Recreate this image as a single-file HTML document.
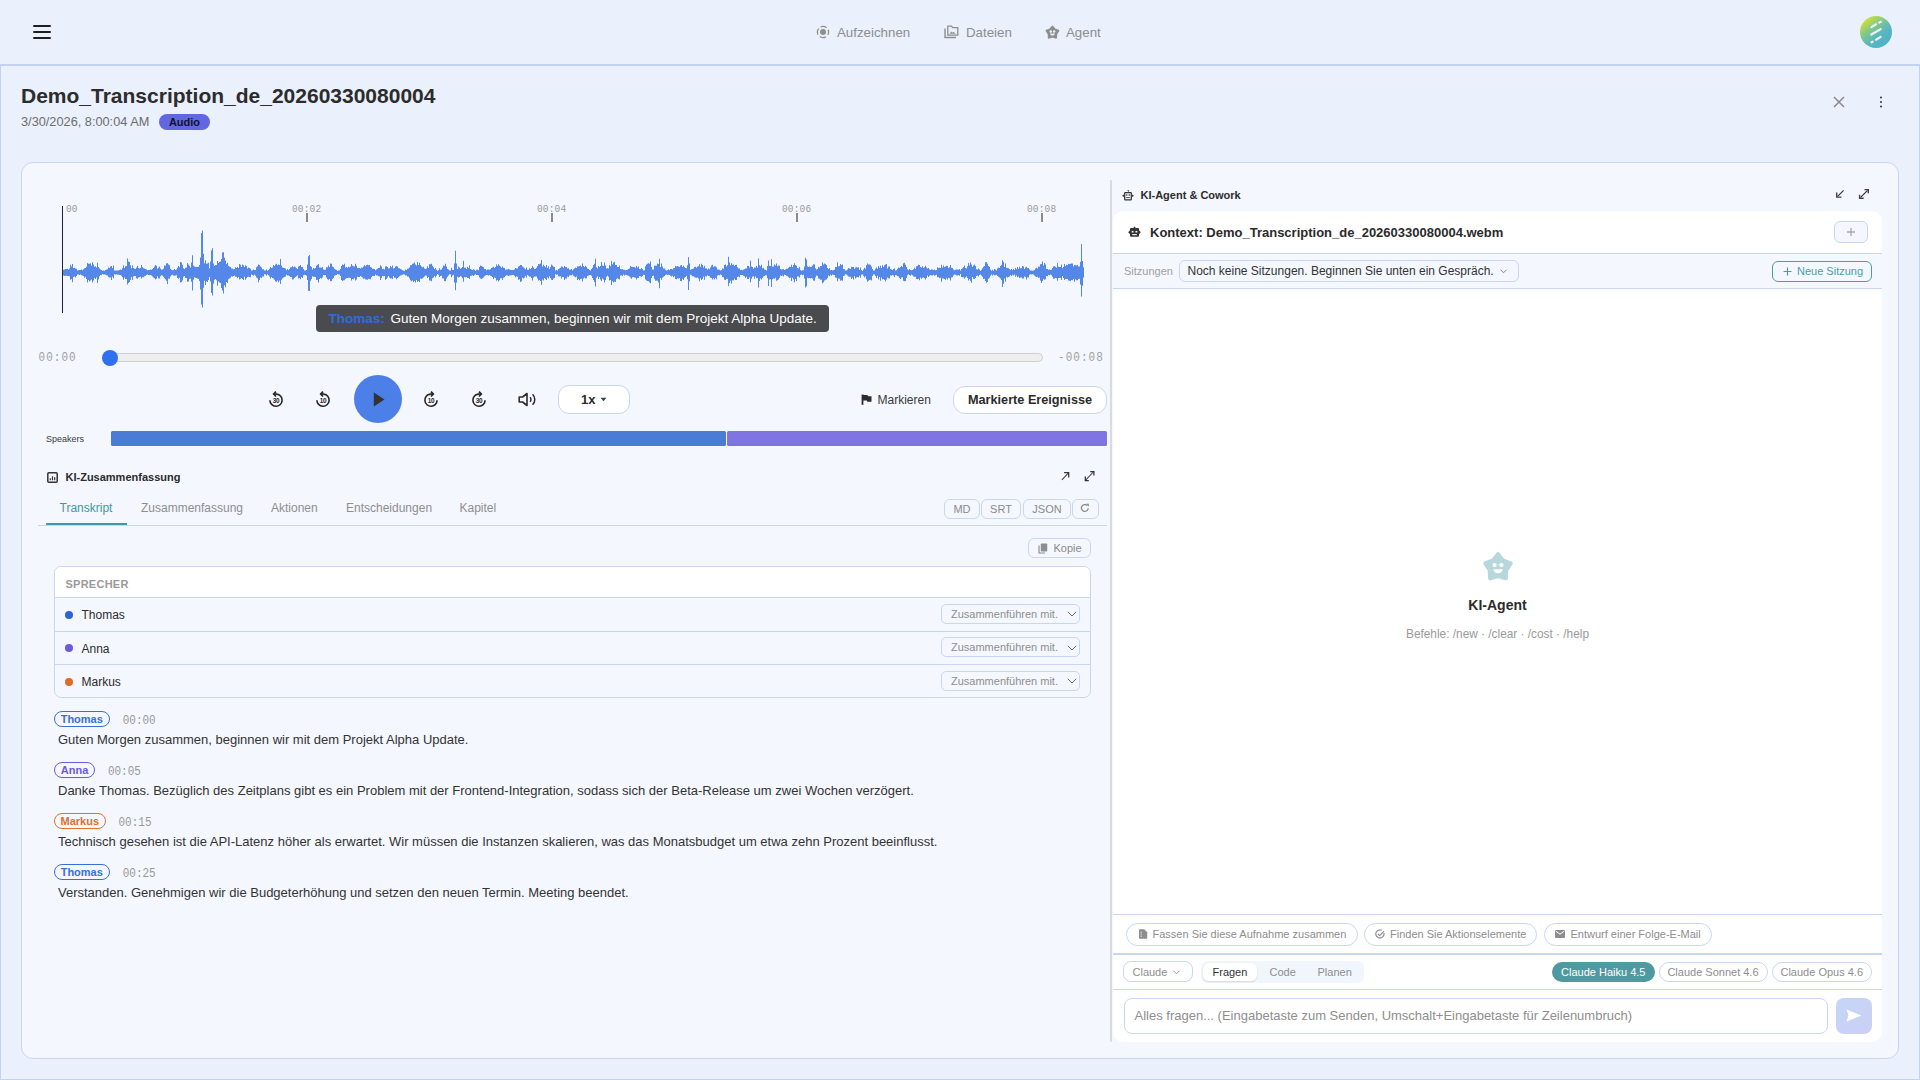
<!DOCTYPE html>
<html><head><meta charset="utf-8">
<style>
*{box-sizing:border-box;margin:0;padding:0}
html,body{width:1920px;height:1080px;overflow:hidden}
body{background:#EAF0FC;font-family:"Liberation Sans",sans-serif;color:#2B2B2B;position:relative}
.a{position:absolute;white-space:nowrap}
.mono{font-family:"Liberation Mono",monospace}
svg{display:block}
</style></head><body>

<!-- top nav -->
<div class="a" style="left:0;top:0;width:1920px;height:66px;border-bottom:2px solid #C3D2F0;"></div>
<div class="a" style="left:33px;top:25px;width:18px;height:2px;background:#1E1E1E;border-radius:1px"></div>
<div class="a" style="left:33px;top:31px;width:18px;height:2px;background:#1E1E1E;border-radius:1px"></div>
<div class="a" style="left:33px;top:37px;width:18px;height:2px;background:#1E1E1E;border-radius:1px"></div>

<!-- frame -->
<div class="a" style="left:0;top:66px;width:1920px;height:1014px;border:1px solid #C3D2F0;border-top:none"></div>


<!-- nav items -->
<svg class="a" style="left:816px;top:25px" width="14" height="14" viewBox="0 0 14 14"><circle cx="7" cy="7" r="5.6" fill="none" stroke="#8E8E8E" stroke-width="1.3" stroke-dasharray="6.3 2.5" stroke-dashoffset="3.15"/><circle cx="7" cy="7" r="3" fill="#8E8E8E"/></svg>
<div class="a" style="left:837px;top:26px;font-size:13.3px;line-height:13px;color:#8E8E8E">Aufzeichnen</div>
<svg class="a" style="left:944px;top:25px" width="15" height="14" viewBox="0 0 15 14"><path d="M1 3.5V12.5H12" fill="none" stroke="#8E8E8E" stroke-width="1.4"/><path d="M3.8 1.2H7.5L8.8 2.6H13.8V10.2H3.8Z" fill="none" stroke="#8E8E8E" stroke-width="1.3"/><path d="M5.6 8.8L7.3 6.4L8.5 7.8L9.5 6.8L11.8 8.8Z" fill="#8E8E8E"/></svg>
<div class="a" style="left:966px;top:26px;font-size:13.3px;line-height:13px;color:#8E8E8E">Dateien</div>
<svg class="a" style="left:1044.7px;top:24.8px" width="14.9" height="14.9" viewBox="0 0 32 32"><polygon points="16.00,3.20 21.05,9.54 28.65,12.39 24.18,19.16 23.82,27.26 16.00,25.10 8.18,27.26 7.82,19.16 3.35,12.39 10.95,9.54" fill="#8E8E8E" stroke="#8E8E8E" stroke-width="4.2" stroke-linejoin="round"/><circle cx="12.4" cy="14" r="2.6" fill="#EAF0FC"/><circle cx="19.6" cy="14" r="2.6" fill="#EAF0FC"/><path d="M10.8 18.2h10.4c-.6 2.9-2.6 4.4-5.2 4.4s-4.6-1.5-5.2-4.4z" fill="#EAF0FC"/></svg>
<div class="a" style="left:1066px;top:26px;font-size:13.3px;line-height:13px;color:#8E8E8E">Agent</div>

<!-- logo -->
<svg class="a" style="left:1860px;top:16px" width="32" height="32" viewBox="0 0 32 32"><defs><linearGradient id="lg" x1="0.1" y1="0.15" x2="0.65" y2="0.85"><stop offset="0" stop-color="#D4E035"/><stop offset="0.4" stop-color="#7FC98A"/><stop offset="0.75" stop-color="#5AB6C0"/><stop offset="1" stop-color="#52B3C6"/></linearGradient></defs><circle cx="16" cy="16" r="16" fill="url(#lg)"/><g stroke="#EEF3FB" stroke-width="2.2" stroke-linecap="round"><path d="M11.4 11.1L16.1 8.3M19.2 6.6L20.9 5.7"/><path d="M11.3 18.5L20.7 13.1"/><path d="M11.5 26.3L12.8 25.6M16.1 23.7L20.7 20.9"/></g></svg>

<!-- close / kebab -->
<svg class="a" style="left:1833px;top:96px" width="12" height="12" viewBox="0 0 12 12"><path d="M1 1L11 11M11 1L1 11" stroke="#8A8A8A" stroke-width="1.5"/></svg>
<svg class="a" style="left:1879px;top:95px" width="4" height="14" viewBox="0 0 4 14"><circle cx="2" cy="2.5" r="1" fill="#333"/><circle cx="2" cy="7" r="1" fill="#333"/><circle cx="2" cy="11.5" r="1" fill="#333"/></svg>

<!-- header -->
<div class="a" style="left:21px;top:84px;font-size:21px;font-weight:bold;color:#2C2C2C;line-height:24px">Demo_Transcription_de_20260330080004</div>
<div class="a" style="left:21px;top:114px;font-size:12.75px;color:#6E6E6E;line-height:16px">3/30/2026, 8:00:04 AM</div>
<div class="a" style="left:159px;top:114px;width:51px;height:16px;border-radius:8px;background:#6366E1;color:#0F1230;font-size:11px;font-weight:bold;line-height:16px;text-align:center">Audio</div>

<!-- main card -->
<div class="a" style="left:21px;top:162px;width:1878px;height:897px;border:1px solid #C9D6F2;border-radius:12px;background:#F4F7FE"></div>


<!-- waveform -->
<svg class="a" style="left:0;top:0" width="1110" height="330" viewBox="0 0 1110 330"><path d="M62,269.8L63,269.8L63,269.7L64,269.7L64,269.5L65,269.5L65,268.9L66,268.9L66,269.1L67,269.1L67,268.7L68,268.7L68,269.4L69,269.4L69,268.5L70,268.5L70,264.7L71,264.7L71,266.6L72,266.6L72,264.1L73,264.1L73,268.1L74,268.1L74,267.8L75,267.8L75,268.5L76,268.5L76,268.8L77,268.8L77,270.4L78,270.4L78,270.3L79,270.3L79,269.9L80,269.9L80,270.1L81,270.1L81,269.6L82,269.6L82,270.2L83,270.2L83,269.2L84,269.2L84,268.2L85,268.2L85,268.1L86,268.1L86,266.8L87,266.8L87,263.1L88,263.1L88,263.8L89,263.8L89,263.7L90,263.7L90,263.2L91,263.2L91,265.8L92,265.8L92,262.2L93,262.2L93,264.6L94,264.6L94,266.8L95,266.8L95,266.3L96,266.3L96,267.5L97,267.5L97,262.7L98,262.7L98,267.0L99,267.0L99,268.5L100,268.5L100,269.5L101,269.5L101,270.1L102,270.1L102,270.7L103,270.7L103,270.5L104,270.5L104,270.7L105,270.7L105,270.1L106,270.1L106,269.6L107,269.6L107,269.3L108,269.3L108,267.6L109,267.6L109,268.0L110,268.0L110,266.6L111,266.6L111,266.0L112,266.0L112,268.0L113,268.0L113,265.5L114,265.5L114,270.4L115,270.4L115,270.5L116,270.5L116,270.6L117,270.6L117,270.4L118,270.4L118,270.5L119,270.5L119,270.1L120,270.1L120,269.6L121,269.6L121,270.0L122,270.0L122,268.3L123,268.3L123,265.4L124,265.4L124,267.9L125,267.9L125,266.3L126,266.3L126,266.0L127,266.0L127,258.5L128,258.5L128,261.4L129,261.4L129,261.9L130,261.9L130,265.2L131,265.2L131,268.3L132,268.3L132,265.5L133,265.5L133,268.0L134,268.0L134,268.8L135,268.8L135,269.0L136,269.0L136,267.6L137,267.6L137,265.7L138,265.7L138,268.1L139,268.1L139,268.5L140,268.5L140,268.0L141,268.0L141,265.1L142,265.1L142,267.0L143,267.0L143,268.2L144,268.2L144,268.5L145,268.5L145,269.0L146,269.0L146,269.5L147,269.5L147,270.3L148,270.3L148,270.1L149,270.1L149,270.0L150,270.0L150,269.6L151,269.6L151,269.8L152,269.8L152,268.9L153,268.9L153,267.9L154,267.9L154,266.5L155,266.5L155,265.0L156,265.0L156,265.8L157,265.8L157,268.8L158,268.8L158,267.8L159,267.8L159,266.5L160,266.5L160,268.4L161,268.4L161,269.7L162,269.7L162,269.5L163,269.5L163,268.8L164,268.8L164,265.5L165,265.5L165,265.7L166,265.7L166,263.3L167,263.3L167,263.2L168,263.2L168,264.5L169,264.5L169,265.2L170,265.2L170,268.8L171,268.8L171,269.8L172,269.8L172,270.2L173,270.2L173,270.1L174,270.1L174,269.1L175,269.1L175,269.9L176,269.9L176,269.6L177,269.6L177,267.7L178,267.7L178,266.1L179,266.1L179,267.3L180,267.3L180,262.1L181,262.1L181,262.6L182,262.6L182,264.8L183,264.8L183,268.2L184,268.2L184,268.9L185,268.9L185,267.8L186,267.8L186,267.5L187,267.5L187,263.0L188,263.0L188,264.5L189,264.5L189,265.8L190,265.8L190,267.4L191,267.4L191,262.5L192,262.5L192,255.2L193,255.2L193,265.5L194,265.5L194,266.5L195,266.5L195,267.0L196,267.0L196,266.7L197,266.7L197,267.0L198,267.0L198,266.7L199,266.7L199,265.1L200,265.1L200,257.4L201,257.4L201,233.0L202,233.0L202,230.4L203,230.4L203,253.7L204,253.7L204,263.3L205,263.3L205,260.2L206,260.2L206,263.7L207,263.7L207,263.4L208,263.4L208,262.8L209,262.8L209,268.2L210,268.2L210,261.4L211,261.4L211,250.4L212,250.4L212,248.2L213,248.2L213,263.5L214,263.5L214,266.1L215,266.1L215,265.0L216,265.0L216,264.9L217,264.9L217,261.1L218,261.1L218,262.9L219,262.9L219,261.9L220,261.9L220,261.6L221,261.6L221,259.0L222,259.0L222,252.4L223,252.4L223,252.2L224,252.2L224,257.7L225,257.7L225,260.4L226,260.4L226,263.9L227,263.9L227,262.8L228,262.8L228,265.8L229,265.8L229,266.5L230,266.5L230,267.0L231,267.0L231,268.4L232,268.4L232,268.6L233,268.6L233,269.3L234,269.3L234,269.0L235,269.0L235,267.2L236,267.2L236,267.9L237,267.9L237,267.1L238,267.1L238,267.9L239,267.9L239,263.9L240,263.9L240,264.8L241,264.8L241,267.1L242,267.1L242,264.5L243,264.5L243,265.3L244,265.3L244,267.1L245,267.1L245,265.4L246,265.4L246,265.9L247,265.9L247,268.5L248,268.5L248,267.6L249,267.6L249,268.0L250,268.0L250,268.7L251,268.7L251,270.5L252,270.5L252,270.3L253,270.3L253,269.6L254,269.6L254,269.9L255,269.9L255,269.9L256,269.9L256,267.3L257,267.3L257,266.3L258,266.3L258,264.4L259,264.4L259,265.0L260,265.0L260,266.6L261,266.6L261,267.6L262,267.6L262,269.2L263,269.2L263,269.2L264,269.2L264,270.5L265,270.5L265,270.6L266,270.6L266,269.6L267,269.6L267,270.7L268,270.7L268,270.1L269,270.1L269,268.7L270,268.7L270,266.9L271,266.9L271,268.1L272,268.1L272,267.4L273,267.4L273,264.9L274,264.9L274,266.0L275,266.0L275,264.5L276,264.5L276,263.8L277,263.8L277,265.3L278,265.3L278,264.6L279,264.6L279,265.1L280,265.1L280,259.1L281,259.1L281,265.5L282,265.5L282,267.5L283,267.5L283,267.8L284,267.8L284,268.1L285,268.1L285,268.4L286,268.4L286,270.2L287,270.2L287,269.1L288,269.1L288,269.9L289,269.9L289,269.0L290,269.0L290,267.4L291,267.4L291,267.2L292,267.2L292,266.3L293,266.3L293,267.3L294,267.3L294,266.4L295,266.4L295,267.2L296,267.2L296,268.2L297,268.2L297,269.1L298,269.1L298,266.4L299,266.4L299,265.9L300,265.9L300,265.1L301,265.1L301,267.0L302,267.0L302,267.1L303,267.1L303,269.1L304,269.1L304,270.5L305,270.5L305,270.4L306,270.4L306,270.1L307,270.1L307,264.5L308,264.5L308,256.3L309,256.3L309,254.9L310,254.9L310,266.0L311,266.0L311,267.0L312,267.0L312,269.5L313,269.5L313,268.0L314,268.0L314,268.4L315,268.4L315,268.1L316,268.1L316,265.8L317,265.8L317,264.7L318,264.7L318,264.1L319,264.1L319,267.4L320,267.4L320,267.5L321,267.5L321,267.8L322,267.8L322,267.1L323,267.1L323,269.6L324,269.6L324,269.7L325,269.7L325,269.8L326,269.8L326,267.3L327,267.3L327,267.2L328,267.2L328,265.6L329,265.6L329,266.9L330,266.9L330,263.4L331,263.4L331,263.7L332,263.7L332,266.5L333,266.5L333,267.2L334,267.2L334,268.7L335,268.7L335,269.6L336,269.6L336,270.1L337,270.1L337,270.8L338,270.8L338,270.5L339,270.5L339,270.5L340,270.5L340,269.1L341,269.1L341,266.0L342,266.0L342,264.6L343,264.6L343,265.0L344,265.0L344,263.8L345,263.8L345,267.4L346,267.4L346,267.0L347,267.0L347,267.7L348,267.7L348,266.8L349,266.8L349,267.2L350,267.2L350,266.4L351,266.4L351,264.0L352,264.0L352,265.7L353,265.7L353,266.2L354,266.2L354,266.5L355,266.5L355,263.8L356,263.8L356,265.7L357,265.7L357,267.9L358,267.9L358,267.9L359,267.9L359,268.1L360,268.1L360,268.4L361,268.4L361,267.6L362,267.6L362,267.7L363,267.7L363,266.4L364,266.4L364,265.2L365,265.2L365,266.3L366,266.3L366,265.1L367,265.1L367,264.8L368,264.8L368,265.2L369,265.2L369,265.0L370,265.0L370,266.9L371,266.9L371,267.6L372,267.6L372,268.8L373,268.8L373,268.7L374,268.7L374,268.9L375,268.9L375,270.3L376,270.3L376,269.6L377,269.6L377,268.7L378,268.7L378,268.1L379,268.1L379,267.7L380,267.7L380,265.2L381,265.2L381,266.5L382,266.5L382,269.3L383,269.3L383,268.7L384,268.7L384,269.4L385,269.4L385,266.4L386,266.4L386,266.3L387,266.3L387,267.1L388,267.1L388,268.6L389,268.6L389,268.3L390,268.3L390,266.1L391,266.1L391,267.3L392,267.3L392,265.5L393,265.5L393,268.6L394,268.6L394,267.9L395,267.9L395,266.4L396,266.4L396,266.0L397,266.0L397,266.6L398,266.6L398,268.2L399,268.2L399,268.3L400,268.3L400,268.9L401,268.9L401,269.5L402,269.5L402,270.3L403,270.3L403,270.5L404,270.5L404,270.9L405,270.9L405,269.4L406,269.4L406,269.9L407,269.9L407,268.7L408,268.7L408,268.4L409,268.4L409,267.6L410,267.6L410,265.3L411,265.3L411,264.9L412,264.9L412,263.8L413,263.8L413,263.5L414,263.5L414,262.5L415,262.5L415,264.5L416,264.5L416,265.4L417,265.4L417,261.9L418,261.9L418,265.0L419,265.0L419,262.7L420,262.7L420,265.2L421,265.2L421,266.4L422,266.4L422,267.3L423,267.3L423,266.8L424,266.8L424,268.4L425,268.4L425,269.0L426,269.0L426,268.6L427,268.6L427,266.3L428,266.3L428,268.1L429,268.1L429,264.3L430,264.3L430,264.2L431,264.2L431,263.8L432,263.8L432,265.8L433,265.8L433,267.3L434,267.3L434,268.9L435,268.9L435,267.9L436,267.9L436,269.8L437,269.8L437,270.7L438,270.7L438,270.2L439,270.2L439,268.3L440,268.3L440,269.7L441,269.7L441,269.6L442,269.6L442,267.7L443,267.7L443,265.5L444,265.5L444,265.8L445,265.8L445,263.7L446,263.7L446,266.4L447,266.4L447,269.0L448,269.0L448,269.6L449,269.6L449,270.4L450,270.4L450,270.6L451,270.6L451,267.8L452,267.8L452,269.8L453,269.8L453,270.1L454,270.1L454,263.6L455,263.6L455,250.8L456,250.8L456,263.5L457,263.5L457,268.9L458,268.9L458,266.5L459,266.5L459,267.6L460,267.6L460,268.8L461,268.8L461,268.1L462,268.1L462,267.0L463,267.0L463,260.7L464,260.7L464,267.7L465,267.7L465,267.5L466,267.5L466,269.0L467,269.0L467,266.8L468,266.8L468,268.1L469,268.1L469,265.4L470,265.4L470,269.1L471,269.1L471,269.4L472,269.4L472,270.1L473,270.1L473,269.3L474,269.3L474,269.8L475,269.8L475,270.8L476,270.8L476,269.7L477,269.7L477,269.8L478,269.8L478,270.2L479,270.2L479,267.0L480,267.0L480,265.4L481,265.4L481,265.9L482,265.9L482,266.5L483,266.5L483,267.2L484,267.2L484,269.1L485,269.1L485,269.0L486,269.0L486,270.2L487,270.2L487,269.5L488,269.5L488,269.6L489,269.6L489,269.8L490,269.8L490,269.3L491,269.3L491,268.1L492,268.1L492,267.5L493,267.5L493,266.7L494,266.7L494,267.8L495,267.8L495,267.0L496,267.0L496,264.6L497,264.6L497,265.9L498,265.9L498,264.2L499,264.2L499,265.4L500,265.4L500,266.6L501,266.6L501,267.7L502,267.7L502,266.5L503,266.5L503,267.7L504,267.7L504,267.9L505,267.9L505,269.8L506,269.8L506,269.5L507,269.5L507,269.5L508,269.5L508,268.9L509,268.9L509,269.5L510,269.5L510,269.8L511,269.8L511,270.1L512,270.1L512,269.9L513,269.9L513,270.0L514,270.0L514,269.5L515,269.5L515,268.1L516,268.1L516,268.4L517,268.4L517,268.5L518,268.5L518,266.6L519,266.6L519,265.9L520,265.9L520,265.0L521,265.0L521,265.1L522,265.1L522,266.6L523,266.6L523,267.2L524,267.2L524,268.3L525,268.3L525,269.3L526,269.3L526,267.5L527,267.5L527,269.8L528,269.8L528,269.7L529,269.7L529,268.2L530,268.2L530,268.9L531,268.9L531,267.9L532,267.9L532,266.0L533,266.0L533,267.6L534,267.6L534,269.0L535,269.0L535,268.8L536,268.8L536,267.7L537,267.7L537,266.0L538,266.0L538,263.9L539,263.9L539,264.3L540,264.3L540,263.5L541,263.5L541,260.1L542,260.1L542,266.4L543,266.4L543,264.8L544,264.8L544,265.9L545,265.9L545,267.3L546,267.3L546,265.0L547,265.0L547,267.9L548,267.9L548,266.2L549,266.2L549,269.0L550,269.0L550,267.1L551,267.1L551,264.4L552,264.4L552,265.5L553,265.5L553,266.6L554,266.6L554,266.9L555,266.9L555,270.5L556,270.5L556,270.0L557,270.0L557,270.4L558,270.4L558,269.1L559,269.1L559,268.6L560,268.6L560,267.8L561,267.8L561,266.4L562,266.4L562,266.7L563,266.7L563,267.7L564,267.7L564,266.0L565,266.0L565,267.0L566,267.0L566,267.0L567,267.0L567,268.5L568,268.5L568,268.3L569,268.3L569,269.6L570,269.6L570,269.8L571,269.8L571,268.9L572,268.9L572,270.4L573,270.4L573,269.3L574,269.3L574,268.6L575,268.6L575,267.6L576,267.6L576,267.9L577,267.9L577,266.2L578,266.2L578,266.6L579,266.6L579,265.9L580,265.9L580,265.4L581,265.4L581,266.7L582,266.7L582,263.6L583,263.6L583,266.1L584,266.1L584,267.1L585,267.1L585,265.8L586,265.8L586,267.1L587,267.1L587,268.5L588,268.5L588,268.9L589,268.9L589,270.0L590,270.0L590,270.4L591,270.4L591,269.0L592,269.0L592,267.8L593,267.8L593,264.9L594,264.9L594,263.8L595,263.8L595,258.7L596,258.7L596,267.2L597,267.2L597,268.5L598,268.5L598,266.0L599,266.0L599,267.0L600,267.0L600,266.1L601,266.1L601,262.1L602,262.1L602,265.6L603,265.6L603,265.9L604,265.9L604,262.6L605,262.6L605,265.6L606,265.6L606,268.5L607,268.5L607,268.2L608,268.2L608,268.4L609,268.4L609,264.9L610,264.9L610,266.2L611,266.2L611,261.1L612,261.1L612,264.2L613,264.2L613,262.6L614,262.6L614,261.8L615,261.8L615,264.9L616,264.9L616,265.1L617,265.1L617,266.9L618,266.9L618,267.0L619,267.0L619,265.4L620,265.4L620,269.0L621,269.0L621,269.3L622,269.3L622,268.9L623,268.9L623,269.8L624,269.8L624,269.7L625,269.7L625,270.3L626,270.3L626,270.0L627,270.0L627,269.8L628,269.8L628,269.1L629,269.1L629,268.6L630,268.6L630,266.0L631,266.0L631,266.8L632,266.8L632,266.9L633,266.9L633,266.9L634,266.9L634,267.2L635,267.2L635,267.8L636,267.8L636,266.1L637,266.1L637,267.6L638,267.6L638,266.5L639,266.5L639,269.0L640,269.0L640,269.2L641,269.2L641,268.1L642,268.1L642,269.1L643,269.1L643,270.4L644,270.4L644,270.2L645,270.2L645,266.2L646,266.2L646,264.4L647,264.4L647,263.8L648,263.8L648,263.3L649,263.3L649,263.8L650,263.8L650,261.5L651,261.5L651,267.1L652,267.1L652,269.5L653,269.5L653,269.5L654,269.5L654,265.6L655,265.6L655,265.7L656,265.7L656,265.8L657,265.8L657,263.5L658,263.5L658,264.0L659,264.0L659,258.8L660,258.8L660,266.9L661,266.9L661,263.4L662,263.4L662,266.6L663,266.6L663,268.6L664,268.6L664,268.6L665,268.6L665,269.8L666,269.8L666,270.6L667,270.6L667,270.3L668,270.3L668,269.6L669,269.6L669,270.0L670,270.0L670,269.0L671,269.0L671,268.9L672,268.9L672,269.5L673,269.5L673,268.3L674,268.3L674,268.1L675,268.1L675,266.1L676,266.1L676,266.5L677,266.5L677,266.0L678,266.0L678,266.4L679,266.4L679,267.1L680,267.1L680,265.4L681,265.4L681,265.1L682,265.1L682,266.7L683,266.7L683,265.7L684,265.7L684,267.3L685,267.3L685,268.1L686,268.1L686,268.2L687,268.2L687,265.3L688,265.3L688,257.2L689,257.2L689,263.6L690,263.6L690,269.8L691,269.8L691,269.3L692,269.3L692,269.1L693,269.1L693,268.6L694,268.6L694,267.1L695,267.1L695,266.7L696,266.7L696,267.7L697,267.7L697,266.6L698,266.6L698,266.3L699,266.3L699,264.2L700,264.2L700,266.8L701,266.8L701,263.7L702,263.7L702,265.0L703,265.0L703,267.6L704,267.6L704,265.8L705,265.8L705,268.2L706,268.2L706,268.4L707,268.4L707,269.6L708,269.6L708,268.4L709,268.4L709,269.2L710,269.2L710,267.6L711,267.6L711,265.4L712,265.4L712,264.8L713,264.8L713,266.7L714,266.7L714,266.3L715,266.3L715,266.4L716,266.4L716,267.2L717,267.2L717,269.5L718,269.5L718,269.5L719,269.5L719,269.7L720,269.7L720,270.4L721,270.4L721,270.0L722,270.0L722,268.4L723,268.4L723,268.8L724,268.8L724,265.1L725,265.1L725,264.4L726,264.4L726,266.4L727,266.4L727,265.2L728,265.2L728,256.7L729,256.7L729,262.5L730,262.5L730,265.2L731,265.2L731,263.3L732,263.3L732,264.7L733,264.7L733,264.6L734,264.6L734,266.0L735,266.0L735,265.0L736,265.0L736,264.8L737,264.8L737,267.2L738,267.2L738,268.6L739,268.6L739,268.6L740,268.6L740,270.1L741,270.1L741,269.7L742,269.7L742,270.2L743,270.2L743,269.5L744,269.5L744,269.2L745,269.2L745,268.5L746,268.5L746,268.4L747,268.4L747,265.7L748,265.7L748,265.9L749,265.9L749,267.6L750,267.6L750,260.7L751,260.7L751,266.4L752,266.4L752,267.1L753,267.1L753,268.7L754,268.7L754,267.6L755,267.6L755,267.4L756,267.4L756,265.9L757,265.9L757,267.4L758,267.4L758,258.4L759,258.4L759,265.3L760,265.3L760,266.2L761,266.2L761,264.8L762,264.8L762,268.2L763,268.2L763,267.8L764,267.8L764,269.5L765,269.5L765,269.8L766,269.8L766,270.4L767,270.4L767,266.0L768,266.0L768,260.6L769,260.6L769,265.8L770,265.8L770,266.0L771,266.0L771,259.2L772,259.2L772,266.4L773,266.4L773,266.6L774,266.6L774,264.5L775,264.5L775,265.6L776,265.6L776,263.4L777,263.4L777,266.2L778,266.2L778,265.5L779,265.5L779,265.8L780,265.8L780,268.9L781,268.9L781,269.4L782,269.4L782,269.3L783,269.3L783,269.1L784,269.1L784,269.9L785,269.9L785,269.4L786,269.4L786,268.7L787,268.7L787,268.7L788,268.7L788,267.8L789,267.8L789,266.8L790,266.8L790,266.9L791,266.9L791,264.7L792,264.7L792,267.0L793,267.0L793,265.1L794,265.1L794,263.2L795,263.2L795,265.0L796,265.0L796,265.8L797,265.8L797,268.1L798,268.1L798,268.4L799,268.4L799,267.0L800,267.0L800,270.1L801,270.1L801,270.8L802,270.8L802,270.3L803,270.3L803,270.3L804,270.3L804,266.4L805,266.4L805,257.7L806,257.7L806,259.4L807,259.4L807,266.2L808,266.2L808,266.9L809,266.9L809,266.6L810,266.6L810,267.1L811,267.1L811,266.8L812,266.8L812,265.4L813,265.4L813,264.2L814,264.2L814,264.5L815,264.5L815,268.3L816,268.3L816,269.6L817,269.6L817,268.9L818,268.9L818,266.9L819,266.9L819,267.5L820,267.5L820,265.9L821,265.9L821,266.1L822,266.1L822,262.6L823,262.6L823,264.4L824,264.4L824,263.5L825,263.5L825,264.1L826,264.1L826,265.1L827,265.1L827,268.0L828,268.0L828,269.1L829,269.1L829,268.3L830,268.3L830,270.3L831,270.3L831,270.0L832,270.0L832,270.6L833,270.6L833,270.0L834,270.0L834,269.7L835,269.7L835,266.9L836,266.9L836,267.0L837,267.0L837,262.3L838,262.3L838,266.4L839,266.4L839,266.0L840,266.0L840,264.0L841,264.0L841,264.9L842,264.9L842,264.4L843,264.4L843,269.1L844,269.1L844,269.2L845,269.2L845,270.6L846,270.6L846,270.4L847,270.4L847,269.6L848,269.6L848,268.0L849,268.0L849,268.6L850,268.6L850,269.0L851,269.0L851,266.7L852,266.7L852,266.9L853,266.9L853,267.1L854,267.1L854,268.7L855,268.7L855,267.5L856,267.5L856,267.3L857,267.3L857,267.4L858,267.4L858,267.3L859,267.3L859,269.8L860,269.8L860,267.5L861,267.5L861,269.9L862,269.9L862,270.9L863,270.9L863,269.5L864,269.5L864,267.7L865,267.7L865,268.8L866,268.8L866,265.2L867,265.2L867,263.4L868,263.4L868,264.4L869,264.4L869,264.4L870,264.4L870,264.7L871,264.7L871,266.5L872,266.5L872,269.1L873,269.1L873,270.5L874,270.5L874,270.4L875,270.4L875,268.7L876,268.7L876,267.6L877,267.6L877,268.7L878,268.7L878,265.9L879,265.9L879,267.7L880,267.7L880,265.8L881,265.8L881,267.9L882,267.9L882,265.2L883,265.2L883,266.9L884,266.9L884,265.2L885,265.2L885,264.4L886,264.4L886,263.9L887,263.9L887,268.4L888,268.4L888,266.5L889,266.5L889,266.4L890,266.4L890,269.0L891,269.0L891,269.4L892,269.4L892,270.1L893,270.1L893,269.1L894,269.1L894,268.2L895,268.2L895,270.5L896,270.5L896,270.3L897,270.3L897,268.8L898,268.8L898,267.4L899,267.4L899,268.0L900,268.0L900,267.1L901,267.1L901,266.0L902,266.0L902,266.9L903,266.9L903,263.3L904,263.3L904,262.7L905,262.7L905,264.8L906,264.8L906,267.0L907,267.0L907,269.3L908,269.3L908,270.2L909,270.2L909,269.1L910,269.1L910,269.9L911,269.9L911,270.2L912,270.2L912,270.0L913,270.0L913,269.3L914,269.3L914,267.7L915,267.7L915,268.7L916,268.7L916,266.2L917,266.2L917,265.7L918,265.7L918,264.8L919,264.8L919,265.0L920,265.0L920,267.1L921,267.1L921,267.5L922,267.5L922,266.3L923,266.3L923,267.7L924,267.7L924,267.2L925,267.2L925,265.7L926,265.7L926,267.5L927,267.5L927,268.4L928,268.4L928,268.1L929,268.1L929,269.6L930,269.6L930,270.1L931,270.1L931,269.6L932,269.6L932,269.4L933,269.4L933,270.1L934,270.1L934,269.5L935,269.5L935,270.2L936,270.2L936,270.1L937,270.1L937,267.2L938,267.2L938,268.1L939,268.1L939,267.7L940,267.7L940,268.1L941,268.1L941,264.8L942,264.8L942,267.4L943,267.4L943,265.4L944,265.4L944,266.9L945,266.9L945,266.5L946,266.5L946,265.7L947,265.7L947,265.9L948,265.9L948,268.0L949,268.0L949,267.2L950,267.2L950,265.0L951,265.0L951,267.7L952,267.7L952,268.0L953,268.0L953,269.5L954,269.5L954,270.2L955,270.2L955,269.7L956,269.7L956,269.4L957,269.4L957,269.5L958,269.5L958,269.7L959,269.7L959,269.0L960,269.0L960,270.4L961,270.4L961,268.9L962,268.9L962,268.2L963,268.2L963,267.1L964,267.1L964,265.6L965,265.6L965,267.9L966,267.9L966,268.4L967,268.4L967,266.2L968,266.2L968,262.9L969,262.9L969,265.6L970,265.6L970,262.6L971,262.6L971,264.5L972,264.5L972,266.7L973,266.7L973,265.5L974,265.5L974,264.5L975,264.5L975,266.1L976,266.1L976,269.2L977,269.2L977,269.6L978,269.6L978,268.5L979,268.5L979,269.6L980,269.6L980,270.7L981,270.7L981,270.0L982,270.0L982,268.2L983,268.2L983,266.8L984,266.8L984,266.1L985,266.1L985,262.3L986,262.3L986,262.0L987,262.0L987,263.8L988,263.8L988,265.9L989,265.9L989,266.7L990,266.7L990,269.5L991,269.5L991,270.8L992,270.8L992,269.7L993,269.7L993,270.7L994,270.7L994,269.1L995,269.1L995,269.4L996,269.4L996,270.6L997,270.6L997,268.5L998,268.5L998,267.6L999,267.6L999,268.1L1000,268.1L1000,265.9L1001,265.9L1001,264.8L1002,264.8L1002,260.2L1003,260.2L1003,262.0L1004,262.0L1004,267.0L1005,267.0L1005,263.5L1006,263.5L1006,267.8L1007,267.8L1007,268.0L1008,268.0L1008,268.3L1009,268.3L1009,268.9L1010,268.9L1010,270.1L1011,270.1L1011,268.9L1012,268.9L1012,270.3L1013,270.3L1013,268.9L1014,268.9L1014,270.0L1015,270.0L1015,267.9L1016,267.9L1016,269.3L1017,269.3L1017,267.1L1018,267.1L1018,268.8L1019,268.8L1019,266.8L1020,266.8L1020,268.2L1021,268.2L1021,268.3L1022,268.3L1022,265.9L1023,265.9L1023,266.6L1024,266.6L1024,269.0L1025,269.0L1025,267.6L1026,267.6L1026,266.8L1027,266.8L1027,267.9L1028,267.9L1028,268.1L1029,268.1L1029,269.5L1030,269.5L1030,270.4L1031,270.4L1031,270.5L1032,270.5L1032,270.7L1033,270.7L1033,270.4L1034,270.4L1034,269.9L1035,269.9L1035,268.6L1036,268.6L1036,267.8L1037,267.8L1037,268.4L1038,268.4L1038,266.4L1039,266.4L1039,266.8L1040,266.8L1040,264.3L1041,264.3L1041,263.9L1042,263.9L1042,261.4L1043,261.4L1043,265.6L1044,265.6L1044,263.0L1045,263.0L1045,264.5L1046,264.5L1046,268.9L1047,268.9L1047,269.0L1048,269.0L1048,269.7L1049,269.7L1049,269.6L1050,269.6L1050,270.1L1051,270.1L1051,269.8L1052,269.8L1052,268.3L1053,268.3L1053,266.5L1054,266.5L1054,266.3L1055,266.3L1055,266.8L1056,266.8L1056,267.7L1057,267.7L1057,263.1L1058,263.1L1058,266.8L1059,266.8L1059,267.1L1060,267.1L1060,266.9L1061,266.9L1061,264.4L1062,264.4L1062,268.2L1063,268.2L1063,267.1L1064,267.1L1064,263.9L1065,263.9L1065,266.0L1066,266.0L1066,264.8L1067,264.8L1067,265.2L1068,265.2L1068,263.7L1069,263.7L1069,264.1L1070,264.1L1070,263.8L1071,263.8L1071,263.5L1072,263.5L1072,263.4L1073,263.4L1073,266.4L1074,266.4L1074,264.9L1075,264.9L1075,265.2L1076,265.2L1076,265.6L1077,265.6L1077,264.9L1078,264.9L1078,266.6L1079,266.6L1079,266.5L1080,266.5L1080,261.7L1081,261.7L1081,244.0L1082,244.0L1082,261.0L1083,261.0L1083,267.3L1084,267.3L1084,277.6L1083,277.6L1083,285.8L1082,285.8L1082,296.5L1081,296.5L1081,284.6L1080,284.6L1080,278.8L1079,278.8L1079,278.9L1078,278.9L1078,280.2L1077,280.2L1077,280.3L1076,280.3L1076,279.2L1075,279.2L1075,281.8L1074,281.8L1074,279.0L1073,279.0L1073,280.2L1072,280.2L1072,280.0L1071,280.0L1071,281.1L1070,281.1L1070,280.8L1069,280.8L1069,280.4L1068,280.4L1068,278.9L1067,278.9L1067,278.9L1066,278.9L1066,278.9L1065,278.9L1065,280.0L1064,280.0L1064,277.9L1063,277.9L1063,276.0L1062,276.0L1062,279.9L1061,279.9L1061,277.7L1060,277.7L1060,278.1L1059,278.1L1059,278.1L1058,278.1L1058,280.8L1057,280.8L1057,278.2L1056,278.2L1056,277.9L1055,277.9L1055,278.4L1054,278.4L1054,278.7L1053,278.7L1053,276.8L1052,276.8L1052,275.2L1051,275.2L1051,274.6L1050,274.6L1050,275.2L1049,275.2L1049,274.9L1048,274.9L1048,276.2L1047,276.2L1047,275.9L1046,275.9L1046,279.3L1045,279.3L1045,279.8L1044,279.8L1044,278.9L1043,278.9L1043,280.9L1042,280.9L1042,283.0L1041,283.0L1041,280.6L1040,280.6L1040,277.4L1039,277.4L1039,278.1L1038,278.1L1038,276.7L1037,276.7L1037,277.1L1036,277.1L1036,276.4L1035,276.4L1035,275.4L1034,275.4L1034,274.5L1033,274.5L1033,274.3L1032,274.3L1032,274.5L1031,274.5L1031,274.3L1030,274.3L1030,274.8L1029,274.8L1029,277.5L1028,277.5L1028,277.6L1027,277.6L1027,279.4L1026,279.4L1026,276.9L1025,276.9L1025,276.6L1024,276.6L1024,278.6L1023,278.6L1023,278.4L1022,278.4L1022,277.4L1021,277.4L1021,277.5L1020,277.5L1020,278.1L1019,278.1L1019,276.4L1018,276.4L1018,277.2L1017,277.2L1017,275.5L1016,275.5L1016,276.8L1015,276.8L1015,274.5L1014,274.5L1014,275.5L1013,275.5L1013,274.8L1012,274.8L1012,276.0L1011,276.0L1011,275.1L1010,275.1L1010,276.6L1009,276.6L1009,277.0L1008,277.0L1008,277.4L1007,277.4L1007,276.8L1006,276.8L1006,281.7L1005,281.7L1005,278.4L1004,278.4L1004,283.8L1003,283.8L1003,287.0L1002,287.0L1002,280.1L1001,280.1L1001,278.4L1000,278.4L1000,277.5L999,277.5L999,276.7L998,276.7L998,275.9L997,275.9L997,274.7L996,274.7L996,275.3L995,275.3L995,275.3L994,275.3L994,274.5L993,274.5L993,275.4L992,275.4L992,274.6L991,274.6L991,275.7L990,275.7L990,277.8L989,277.8L989,278.7L988,278.7L988,282.1L987,282.1L987,282.7L986,282.7L986,281.1L985,281.1L985,278.7L984,278.7L984,278.9L983,278.9L983,276.8L982,276.8L982,275.4L981,275.4L981,274.6L980,274.6L980,275.0L979,275.0L979,276.5L978,276.5L978,275.5L977,275.5L977,276.1L976,276.1L976,278.1L975,278.1L975,279.0L974,279.0L974,278.7L973,278.7L973,276.9L972,276.9L972,282.7L971,282.7L971,280.7L970,280.7L970,279.0L969,279.0L969,280.5L968,280.5L968,278.1L967,278.1L967,276.6L966,276.6L966,277.5L965,277.5L965,278.6L964,278.6L964,277.2L963,277.2L963,277.2L962,277.2L962,277.1L961,277.1L961,274.1L960,274.1L960,275.8L959,275.8L959,275.3L958,275.3L958,275.5L957,275.5L957,275.3L956,275.3L956,274.7L955,274.7L955,274.4L954,274.4L954,275.6L953,275.6L953,277.2L952,277.2L952,277.4L951,277.4L951,280.5L950,280.5L950,278.3L949,278.3L949,277.7L948,277.7L948,279.5L947,279.5L947,278.2L946,278.2L946,279.7L945,279.7L945,279.0L944,279.0L944,278.6L943,278.6L943,278.6L942,278.6L942,281.7L941,281.7L941,277.7L940,277.7L940,278.2L939,278.2L939,276.9L938,276.9L938,277.2L937,277.2L937,274.8L936,274.8L936,275.2L935,275.2L935,275.7L934,275.7L934,274.8L933,274.8L933,275.4L932,275.4L932,275.4L931,275.4L931,275.1L930,275.1L930,275.7L929,275.7L929,277.1L928,277.1L928,275.5L927,275.5L927,278.0L926,278.0L926,279.4L925,279.4L925,278.3L924,278.3L924,277.6L923,277.6L923,277.8L922,277.8L922,278.7L921,278.7L921,277.6L920,277.6L920,280.2L919,280.2L919,278.7L918,278.7L918,279.2L917,279.2L917,278.9L916,278.9L916,276.8L915,276.8L915,276.7L914,276.7L914,276.6L913,276.6L913,275.2L912,275.2L912,274.5L911,274.5L911,275.8L910,275.8L910,275.1L909,275.1L909,274.3L908,274.3L908,275.2L907,275.2L907,278.0L906,278.0L906,280.9L905,280.9L905,281.2L904,281.2L904,280.8L903,280.8L903,277.2L902,277.2L902,277.6L901,277.6L901,279.1L900,279.1L900,278.0L899,278.0L899,276.5L898,276.5L898,275.9L897,275.9L897,275.2L896,275.2L896,275.1L895,275.1L895,276.9L894,276.9L894,275.5L893,275.5L893,275.0L892,275.0L892,275.4L891,275.4L891,275.5L890,275.5L890,278.4L889,278.4L889,278.2L888,278.2L888,277.4L887,277.4L887,279.5L886,279.5L886,281.5L885,281.5L885,280.0L884,280.0L884,279.1L883,279.1L883,279.2L882,279.2L882,277.4L881,277.4L881,280.7L880,280.7L880,277.0L879,277.0L879,279.6L878,279.6L878,275.7L877,275.7L877,277.9L876,277.9L876,276.0L875,276.0L875,274.4L874,274.4L874,274.5L873,274.5L873,276.1L872,276.1L872,280.4L871,280.4L871,279.7L870,279.7L870,280.0L869,280.0L869,280.8L868,280.8L868,281.7L867,281.7L867,279.3L866,279.3L866,276.2L865,276.2L865,277.4L864,277.4L864,275.8L863,275.8L863,274.2L862,274.2L862,274.8L861,274.8L861,277.7L860,277.7L860,275.7L859,275.7L859,277.2L858,277.2L858,276.9L857,276.9L857,277.6L856,277.6L856,278.6L855,278.6L855,276.3L854,276.3L854,279.4L853,279.4L853,277.8L852,277.8L852,279.1L851,279.1L851,276.7L850,276.7L850,276.7L849,276.7L849,276.4L848,276.4L848,275.4L847,275.4L847,274.5L846,274.5L846,274.3L845,274.3L845,275.6L844,275.6L844,275.9L843,275.9L843,280.8L842,280.8L842,280.2L841,280.2L841,280.7L840,280.7L840,278.8L839,278.8L839,278.5L838,278.5L838,281.2L837,281.2L837,277.8L836,277.8L836,277.6L835,277.6L835,275.1L834,275.1L834,274.9L833,274.9L833,274.6L832,274.6L832,275.7L831,275.7L831,274.7L830,274.7L830,276.2L829,276.2L829,275.5L828,275.5L828,278.1L827,278.1L827,279.6L826,279.6L826,279.8L825,279.8L825,280.4L824,280.4L824,282.2L823,282.2L823,283.2L822,283.2L822,279.7L821,279.7L821,279.8L820,279.8L820,278.7L819,278.7L819,278.6L818,278.6L818,276.0L817,276.0L817,275.5L816,275.5L816,277.4L815,277.4L815,280.8L814,280.8L814,280.5L813,280.5L813,278.5L812,278.5L812,277.9L811,277.9L811,278.6L810,278.6L810,278.0L809,278.0L809,278.3L808,278.3L808,277.7L807,277.7L807,286.3L806,286.3L806,287.4L805,287.4L805,278.5L804,278.5L804,274.8L803,274.8L803,275.2L802,275.2L802,274.5L801,274.5L801,274.9L800,274.9L800,277.5L799,277.5L799,276.5L798,276.5L798,276.5L797,276.5L797,280.9L796,280.9L796,279.1L795,279.1L795,282.3L794,282.3L794,279.4L793,279.4L793,277.7L792,277.7L792,281.0L791,281.0L791,277.4L790,277.4L790,278.1L789,278.1L789,277.3L788,277.3L788,276.3L787,276.3L787,275.7L786,275.7L786,275.1L785,275.1L785,274.8L784,274.8L784,276.5L783,276.5L783,275.6L782,275.6L782,275.9L781,275.9L781,275.4L780,275.4L780,277.7L779,277.7L779,279.5L778,279.5L778,280.3L777,280.3L777,280.7L776,280.7L776,277.7L775,277.7L775,278.7L774,278.7L774,278.4L773,278.4L773,279.2L772,279.2L772,287.0L771,287.0L771,279.2L770,279.2L770,279.6L769,279.6L769,286.1L768,286.1L768,278.2L767,278.2L767,275.3L766,275.3L766,275.3L765,275.3L765,275.9L764,275.9L764,276.6L763,276.6L763,278.1L762,278.1L762,279.4L761,279.4L761,278.6L760,278.6L760,281.0L759,281.0L759,287.6L758,287.6L758,278.1L757,278.1L757,278.2L756,278.2L756,276.6L755,276.6L755,278.8L754,278.8L754,276.2L753,276.2L753,276.7L752,276.7L752,278.8L751,278.8L751,282.2L750,282.2L750,277.4L749,277.4L749,279.0L748,279.0L748,279.1L747,279.1L747,276.8L746,276.8L746,277.9L745,277.9L745,276.2L744,276.2L744,275.8L743,275.8L743,274.9L742,274.9L742,274.9L741,274.9L741,275.1L740,275.1L740,277.2L739,277.2L739,276.6L738,276.6L738,277.0L737,277.0L737,280.1L736,280.1L736,280.0L735,280.0L735,278.8L734,278.8L734,280.6L733,280.6L733,280.2L732,280.2L732,283.5L731,283.5L731,280.7L730,280.7L730,283.1L729,283.1L729,286.3L728,286.3L728,278.7L727,278.7L727,279.0L726,279.0L726,280.0L725,280.0L725,279.8L724,279.8L724,277.3L723,277.3L723,276.9L722,276.9L722,274.9L721,274.9L721,274.5L720,274.5L720,275.3L719,275.3L719,275.0L718,275.0L718,275.8L717,275.8L717,279.2L716,279.2L716,277.7L715,277.7L715,279.4L714,279.4L714,278.2L713,278.2L713,279.4L712,279.4L712,278.0L711,278.0L711,277.7L710,277.7L710,276.2L709,276.2L709,276.1L708,276.1L708,275.3L707,275.3L707,276.5L706,276.5L706,276.3L705,276.3L705,279.7L704,279.7L704,276.8L703,276.8L703,279.1L702,279.1L702,280.1L701,280.1L701,278.3L700,278.3L700,281.2L699,281.2L699,278.5L698,278.5L698,277.5L697,277.5L697,277.7L696,277.7L696,277.4L695,277.4L695,277.2L694,277.2L694,276.3L693,276.3L693,276.2L692,276.2L692,275.2L691,275.2L691,274.7L690,274.7L690,281.3L689,281.3L689,290.1L688,290.1L688,279.3L687,279.3L687,275.9L686,275.9L686,276.9L685,276.9L685,277.8L684,277.8L684,279.9L683,279.9L683,278.7L682,278.7L682,281.2L681,281.2L681,281.0L680,281.0L680,277.9L679,277.9L679,278.8L678,278.8L678,278.3L677,278.3L677,279.2L676,279.2L676,279.0L675,279.0L675,276.2L674,276.2L674,277.3L673,277.3L673,275.7L672,275.7L672,276.4L671,276.4L671,275.7L670,275.7L670,274.9L669,274.9L669,274.8L668,274.8L668,274.9L667,274.9L667,274.4L666,274.4L666,274.9L665,274.9L665,276.0L664,276.0L664,276.8L663,276.8L663,277.8L662,277.8L662,279.8L661,279.8L661,277.9L660,277.9L660,288.3L659,288.3L659,282.5L658,282.5L658,280.7L657,280.7L657,280.6L656,280.6L656,280.8L655,280.8L655,278.7L654,278.7L654,275.7L653,275.7L653,276.0L652,276.0L652,277.9L651,277.9L651,283.3L650,283.3L650,282.2L649,282.2L649,281.2L648,281.2L648,281.1L647,281.1L647,280.5L646,280.5L646,279.5L645,279.5L645,275.1L644,275.1L644,274.8L643,274.8L643,276.1L642,276.1L642,277.1L641,277.1L641,276.2L640,276.2L640,275.9L639,275.9L639,278.0L638,278.0L638,277.9L637,277.9L637,279.5L636,279.5L636,277.7L635,277.7L635,277.4L634,277.4L634,277.1L633,277.1L633,277.2L632,277.2L632,278.8L631,278.8L631,277.4L630,277.4L630,276.6L629,276.6L629,275.7L628,275.7L628,275.6L627,275.6L627,274.9L626,274.9L626,274.7L625,274.7L625,275.6L624,275.6L624,274.6L623,274.6L623,275.9L622,275.9L622,275.6L621,275.6L621,275.6L620,275.6L620,279.6L619,279.6L619,278.9L618,278.9L618,278.2L617,278.2L617,279.0L616,279.0L616,282.0L615,282.0L615,281.6L614,281.6L614,282.4L613,282.4L613,281.2L612,281.2L612,285.1L611,285.1L611,279.9L610,279.9L610,280.4L609,280.4L609,276.8L608,276.8L608,275.8L607,275.8L607,276.8L606,276.8L606,280.0L605,280.0L605,282.3L604,282.3L604,279.4L603,279.4L603,278.5L602,278.5L602,281.1L601,281.1L601,279.4L600,279.4L600,277.0L599,277.0L599,279.1L598,279.1L598,276.2L597,276.2L597,277.7L596,277.7L596,286.4L595,286.4L595,281.9L594,281.9L594,280.0L593,280.0L593,278.0L592,278.0L592,275.7L591,275.7L591,274.9L590,274.9L590,275.0L589,275.0L589,275.5L588,275.5L588,275.9L587,275.9L587,278.2L586,278.2L586,278.4L585,278.4L585,277.5L584,277.5L584,278.5L583,278.5L583,281.4L582,281.4L582,278.7L581,278.7L581,279.1L580,279.1L580,280.3L579,280.3L579,279.0L578,279.0L578,280.0L577,280.0L577,276.5L576,276.5L576,277.2L575,277.2L575,276.5L574,276.5L574,275.7L573,275.7L573,274.6L572,274.6L572,275.3L571,275.3L571,275.3L570,275.3L570,275.5L569,275.5L569,277.1L568,277.1L568,276.5L567,276.5L567,278.5L566,278.5L566,278.5L565,278.5L565,280.1L564,280.1L564,277.0L563,277.0L563,276.9L562,276.9L562,278.5L561,278.5L561,276.2L560,276.2L560,276.6L559,276.6L559,276.2L558,276.2L558,274.5L557,274.5L557,274.8L556,274.8L556,274.3L555,274.3L555,278.1L554,278.1L554,278.5L553,278.5L553,280.0L552,280.0L552,279.8L551,279.8L551,278.1L550,278.1L550,276.2L549,276.2L549,278.5L548,278.5L548,277.2L547,277.2L547,280.0L546,280.0L546,278.9L545,278.9L545,278.1L544,278.1L544,280.6L543,280.6L543,279.5L542,279.5L542,284.8L541,284.8L541,281.0L540,281.0L540,279.9L539,279.9L539,280.6L538,280.6L538,278.5L537,278.5L537,276.5L536,276.5L536,276.5L535,276.5L535,276.6L534,276.6L534,277.5L533,277.5L533,280.5L532,280.5L532,277.9L531,277.9L531,276.6L530,276.6L530,276.7L529,276.7L529,275.8L528,275.8L528,275.0L527,275.0L527,277.6L526,277.6L526,275.9L525,275.9L525,277.8L524,277.8L524,278.4L523,278.4L523,277.7L522,277.7L522,281.3L521,281.3L521,282.0L520,282.0L520,279.3L519,279.3L519,279.7L518,279.7L518,276.7L517,276.7L517,276.5L516,276.5L516,277.2L515,277.2L515,275.8L514,275.8L514,275.1L513,275.1L513,275.0L512,275.0L512,275.2L511,275.2L511,275.5L510,275.5L510,275.6L509,275.6L509,276.1L508,276.1L508,275.6L507,275.6L507,275.2L506,275.2L506,275.9L505,275.9L505,277.2L504,277.2L504,277.8L503,277.8L503,279.7L502,279.7L502,278.1L501,278.1L501,278.3L500,278.3L500,280.3L499,280.3L499,281.4L498,281.4L498,280.0L497,280.0L497,280.8L496,280.8L496,278.0L495,278.0L495,277.4L494,277.4L494,278.9L493,278.9L493,277.1L492,277.1L492,276.2L491,276.2L491,275.7L490,275.7L490,274.9L489,274.9L489,275.4L488,275.4L488,275.1L487,275.1L487,275.1L486,275.1L486,275.6L485,275.6L485,276.3L484,276.3L484,277.5L483,277.5L483,278.2L482,278.2L482,279.0L481,279.0L481,278.5L480,278.5L480,277.6L479,277.6L479,275.2L478,275.2L478,275.0L477,275.0L477,275.1L476,275.1L476,274.2L475,274.2L475,275.0L474,275.0L474,275.9L473,275.9L473,275.2L472,275.2L472,275.8L471,275.8L471,276.0L470,276.0L470,279.1L469,279.1L469,278.0L468,278.0L468,277.9L467,277.9L467,277.1L466,277.1L466,277.2L465,277.2L465,277.1L464,277.1L464,281.8L463,281.8L463,278.3L462,278.3L462,276.8L461,276.8L461,276.0L460,276.0L460,277.1L459,277.1L459,277.4L458,277.4L458,276.8L457,276.8L457,282.5L456,282.5L456,290.3L455,290.3L455,282.6L454,282.6L454,274.8L453,274.8L453,275.5L452,275.5L452,277.3L451,277.3L451,274.3L450,274.3L450,274.3L449,274.3L449,275.6L448,275.6L448,276.8L447,276.8L447,278.4L446,278.4L446,281.3L445,281.3L445,280.9L444,280.9L444,278.5L443,278.5L443,278.3L442,278.3L442,275.7L441,275.7L441,276.1L440,276.1L440,276.9L439,276.9L439,274.8L438,274.8L438,274.0L437,274.0L437,275.8L436,275.8L436,277.5L435,277.5L435,276.0L434,276.0L434,277.5L433,277.5L433,278.2L432,278.2L432,281.3L431,281.3L431,280.6L430,280.6L430,280.4L429,280.4L429,277.0L428,277.0L428,277.9L427,277.9L427,275.8L426,275.8L426,275.5L425,275.5L425,276.6L424,276.6L424,277.5L423,277.5L423,278.3L422,278.3L422,279.0L421,279.0L421,278.4L420,278.4L420,281.9L419,281.9L419,280.9L418,280.9L418,281.7L417,281.7L417,280.0L416,280.0L416,282.4L415,282.4L415,281.1L414,281.1L414,282.1L413,282.1L413,280.4L412,280.4L412,281.3L411,281.3L411,280.2L410,280.2L410,278.3L409,278.3L409,276.4L408,276.4L408,276.6L407,276.6L407,275.3L406,275.3L406,275.5L405,275.5L405,274.4L404,274.4L404,274.3L403,274.3L403,274.8L402,274.8L402,275.2L401,275.2L401,275.6L400,275.6L400,276.2L399,276.2L399,277.2L398,277.2L398,278.0L397,278.0L397,279.2L396,279.2L396,277.7L395,277.7L395,277.8L394,277.8L394,276.1L393,276.1L393,279.1L392,279.1L392,278.2L391,278.2L391,278.6L390,278.6L390,277.4L389,277.4L389,276.0L388,276.0L388,277.5L387,277.5L387,279.0L386,279.0L386,279.7L385,279.7L385,276.1L384,276.1L384,276.2L383,276.2L383,275.9L382,275.9L382,278.1L381,278.1L381,280.0L380,280.0L380,276.6L379,276.6L379,276.3L378,276.3L378,275.4L377,275.4L377,275.4L376,275.4L376,274.6L375,274.6L375,275.9L374,275.9L374,276.1L373,276.1L373,276.1L372,276.1L372,277.3L371,277.3L371,279.3L370,279.3L370,278.9L369,278.9L369,278.8L368,278.8L368,279.8L367,279.8L367,279.5L366,279.5L366,279.4L365,279.4L365,278.5L364,278.5L364,278.7L363,278.7L363,277.4L362,277.4L362,276.8L361,276.8L361,276.0L360,276.0L360,276.9L359,276.9L359,276.9L358,276.9L358,276.8L357,276.8L357,279.4L356,279.4L356,280.6L355,280.6L355,277.9L354,277.9L354,279.3L353,279.3L353,278.9L352,278.9L352,280.4L351,280.4L351,277.9L350,277.9L350,277.8L349,277.8L349,277.8L348,277.8L348,277.9L347,277.9L347,277.9L346,277.9L346,278.7L345,278.7L345,280.3L344,280.3L344,280.2L343,280.2L343,281.1L342,281.1L342,280.0L341,280.0L341,276.0L340,276.0L340,274.5L339,274.5L339,274.4L338,274.4L338,274.1L337,274.1L337,275.0L336,275.0L336,275.2L335,275.2L335,275.7L334,275.7L334,278.1L333,278.1L333,278.9L332,278.9L332,281.0L331,281.0L331,281.2L330,281.2L330,279.0L329,279.0L329,279.8L328,279.8L328,279.3L327,279.3L327,277.5L326,277.5L326,274.9L325,274.9L325,275.2L324,275.2L324,274.9L323,274.9L323,277.6L322,277.6L322,278.5L321,278.5L321,278.1L320,278.1L320,279.0L319,279.0L319,282.5L318,282.5L318,279.7L317,279.7L317,280.1L316,280.1L316,277.1L315,277.1L315,276.7L314,276.7L314,276.7L313,276.7L313,276.3L312,276.3L312,279.0L311,279.0L311,280.8L310,280.8L310,291.0L309,291.0L309,290.7L308,290.7L308,280.0L307,280.0L307,275.8L306,275.8L306,275.0L305,275.0L305,274.7L304,274.7L304,275.3L303,275.3L303,277.9L302,277.9L302,277.1L301,277.1L301,279.2L300,279.2L300,277.9L299,277.9L299,278.4L298,278.4L298,275.3L297,275.3L297,276.2L296,276.2L296,277.1L295,277.1L295,278.0L294,278.0L294,279.3L293,279.3L293,279.6L292,279.6L292,277.1L291,277.1L291,276.9L290,276.9L290,275.9L289,275.9L289,275.5L288,275.5L288,275.5L287,275.5L287,274.7L286,274.7L286,276.4L285,276.4L285,277.0L284,277.0L284,277.6L283,277.6L283,278.6L282,278.6L282,279.8L281,279.8L281,283.9L280,283.9L280,280.4L279,280.4L279,282.2L278,282.2L278,280.5L277,280.5L277,281.7L276,281.7L276,281.4L275,281.4L275,279.7L274,279.7L274,278.5L273,278.5L273,277.9L272,277.9L272,277.0L271,277.0L271,278.6L270,278.6L270,276.4L269,276.4L269,275.2L268,275.2L268,274.3L267,274.3L267,275.6L266,275.6L266,274.6L265,274.6L265,274.2L264,274.2L264,276.6L263,276.6L263,276.5L262,276.5L262,277.9L261,277.9L261,277.4L260,277.4L260,279.9L259,279.9L259,282.2L258,282.2L258,278.3L257,278.3L257,277.6L256,277.6L256,275.8L255,275.8L255,274.8L254,274.8L254,275.5L253,275.5L253,274.9L252,274.9L252,274.4L251,274.4L251,277.2L250,277.2L250,277.0L249,277.0L249,276.7L248,276.7L248,276.9L247,276.9L247,278.2L246,278.2L246,279.8L245,279.8L245,276.8L244,276.8L244,280.1L243,280.1L243,279.0L242,279.0L242,277.9L241,277.9L241,278.8L240,278.8L240,279.6L239,279.6L239,276.9L238,276.9L238,277.9L237,277.9L237,276.7L236,276.7L236,276.8L235,276.8L235,275.6L234,275.6L234,276.1L233,276.1L233,276.6L232,276.6L232,276.2L231,276.2L231,277.7L230,277.7L230,278.4L229,278.4L229,279.2L228,279.2L228,283.1L227,283.1L227,282.1L226,282.1L226,287.3L225,287.3L225,285.3L224,285.3L224,293.6L223,293.6L223,290.5L222,290.5L222,288.0L221,288.0L221,282.9L220,282.9L220,282.5L219,282.5L219,281.6L218,281.6L218,285.8L217,285.8L217,280.3L216,280.3L216,279.0L215,279.0L215,279.7L214,279.7L214,283.7L213,283.7L213,295.5L212,295.5L212,292.9L211,292.9L211,281.6L210,281.6L210,277.0L209,277.0L209,280.0L208,280.0L208,282.1L207,282.1L207,281.3L206,281.3L206,285.0L205,285.0L205,280.7L204,280.7L204,287.8L203,287.8L203,307.5L202,307.5L202,304.6L201,304.6L201,289.6L200,289.6L200,281.1L199,281.1L199,278.9L198,278.9L198,278.6L197,278.6L197,278.1L196,278.1L196,277.7L195,277.7L195,277.3L194,277.3L194,279.7L193,279.7L193,290.6L192,290.6L192,281.8L191,281.8L191,278.4L190,278.4L190,278.9L189,278.9L189,281.4L188,281.4L188,281.8L187,281.8L187,277.9L186,277.9L186,277.9L185,277.9L185,276.1L184,276.1L184,276.8L183,276.8L183,280.4L182,280.4L182,282.0L181,282.0L181,282.5L180,282.5L180,277.8L179,277.8L179,278.7L178,278.7L178,278.1L177,278.1L177,275.2L176,275.2L176,275.6L175,275.6L175,275.8L174,275.8L174,275.4L173,275.4L173,274.8L172,274.8L172,275.3L171,275.3L171,276.6L170,276.6L170,278.8L169,278.8L169,278.5L168,278.5L168,284.0L167,284.0L167,280.7L166,280.7L166,279.3L165,279.3L165,278.2L164,278.2L164,276.8L163,276.8L163,275.4L162,275.4L162,275.3L161,275.3L161,276.3L160,276.3L160,278.6L159,278.6L159,278.3L158,278.3L158,276.3L157,276.3L157,278.4L156,278.4L156,279.6L155,279.6L155,278.3L154,278.3L154,277.6L153,277.6L153,276.5L152,276.5L152,275.4L151,275.4L151,275.1L150,275.1L150,275.2L149,275.2L149,274.9L148,274.9L148,274.6L147,274.6L147,275.0L146,275.0L146,275.8L145,275.8L145,276.2L144,276.2L144,277.3L143,277.3L143,277.3L142,277.3L142,278.4L141,278.4L141,276.8L140,276.8L140,277.0L139,277.0L139,277.5L138,277.5L138,278.7L137,278.7L137,278.3L136,278.3L136,276.0L135,276.0L135,275.9L134,275.9L134,276.3L133,276.3L133,279.9L132,279.9L132,277.1L131,277.1L131,279.9L130,279.9L130,281.9L129,281.9L129,282.9L128,282.9L128,284.4L127,284.4L127,278.9L126,278.9L126,278.9L125,278.9L125,277.4L124,277.4L124,279.7L123,279.7L123,277.3L122,277.3L122,275.7L121,275.7L121,275.1L120,275.1L120,275.0L119,275.0L119,274.6L118,274.6L118,274.7L117,274.7L117,274.3L116,274.3L116,274.6L115,274.6L115,274.3L114,274.3L114,278.2L113,278.2L113,276.8L112,276.8L112,280.0L111,280.0L111,277.4L110,277.4L110,277.5L109,277.5L109,277.1L108,277.1L108,275.4L107,275.4L107,275.3L106,275.3L106,274.7L105,274.7L105,274.5L104,274.5L104,274.5L103,274.5L103,274.1L102,274.1L102,275.3L101,275.3L101,274.9L100,274.9L100,276.2L99,276.2L99,279.5L98,279.5L98,283.0L97,283.0L97,277.5L96,277.5L96,279.1L95,279.1L95,278.1L94,278.1L94,280.6L93,280.6L93,282.4L92,282.4L92,279.5L91,279.5L91,280.5L90,280.5L90,281.6L89,281.6L89,279.9L88,279.9L88,282.5L87,282.5L87,278.9L86,278.9L86,276.8L85,276.8L85,277.7L84,277.7L84,276.0L83,276.0L83,275.5L82,275.5L82,275.3L81,275.3L81,274.4L80,274.4L80,274.9L79,274.9L79,274.6L78,274.6L78,274.6L77,274.6L77,275.9L76,275.9L76,277.4L75,277.4L75,276.6L74,276.6L74,277.0L73,277.0L73,282.3L72,282.3L72,279.1L71,279.1L71,279.7L70,279.7L70,276.3L69,276.3L69,276.0L68,276.0L68,275.9L67,275.9L67,275.8L66,275.8L66,275.7L65,275.7L65,276.0L64,276.0L64,275.5L63,275.5L63,275.6L62,275.6Z" fill="#5587E8"/></svg>
<div class="a" style="left:61.5px;top:206px;width:1.5px;height:107px;background:#1F2333"></div>
<div class="a mono" style="left:66px;top:204.8px;font-size:9.5px;line-height:9.5px;color:#9A9A9A;letter-spacing:0.15px;transform:scaleY(1.17);transform-origin:0 8px">00</div>
<div class="a mono" style="left:292px;top:204.8px;font-size:9.5px;line-height:9.5px;color:#9A9A9A;letter-spacing:0.15px;transform:scaleY(1.17);transform-origin:0 8px">00:02</div>
<div class="a mono" style="left:537px;top:204.8px;font-size:9.5px;line-height:9.5px;color:#9A9A9A;letter-spacing:0.15px;transform:scaleY(1.17);transform-origin:0 8px">00:04</div>
<div class="a mono" style="left:782px;top:204.8px;font-size:9.5px;line-height:9.5px;color:#9A9A9A;letter-spacing:0.15px;transform:scaleY(1.17);transform-origin:0 8px">00:06</div>
<div class="a mono" style="left:1027px;top:204.8px;font-size:9.5px;line-height:9.5px;color:#9A9A9A;letter-spacing:0.15px;transform:scaleY(1.17);transform-origin:0 8px">00:08</div>
<div class="a" style="left:306px;top:213px;width:2px;height:9px;background:#8A8A8A"></div>
<div class="a" style="left:551px;top:213px;width:2px;height:9px;background:#8A8A8A"></div>
<div class="a" style="left:796px;top:213px;width:2px;height:9px;background:#8A8A8A"></div>
<div class="a" style="left:1041px;top:213px;width:2px;height:9px;background:#8A8A8A"></div>

<!-- tooltip -->
<div class="a" style="left:316px;top:304.5px;width:513px;height:27px;background:#4A4B4E;border-radius:4px"></div>
<div class="a" style="left:328.5px;top:311.5px;font-size:13.5px;line-height:13.5px;color:#2F6BE0;font-weight:bold">Thomas:</div>
<div class="a" style="left:390.5px;top:311.5px;font-size:13.5px;line-height:13.5px;color:#FFFFFF">Guten Morgen zusammen, beginnen wir mit dem Projekt Alpha Update.</div>

<!-- progress -->
<div class="a mono" style="left:38.5px;top:352.5px;font-size:11px;line-height:11px;color:#A0A0A0;letter-spacing:1.05px;transform:scaleY(1.15);transform-origin:0 9px">00:00</div>
<div class="a" style="left:104px;top:353px;width:939px;height:9px;border-radius:5px;background:#EEEEEE;border:1px solid #CFCFCF"></div>
<div class="a" style="left:102px;top:349.5px;width:16px;height:16px;border-radius:50%;background:#2F6FF0"></div>
<div class="a mono" style="left:1058px;top:352.5px;font-size:11px;line-height:11px;color:#A0A0A0;letter-spacing:1.05px;transform:scaleY(1.15);transform-origin:0 9px">-00:08</div>

<!-- controls -->
<svg class="a" style="left:262.5px;top:386px" width="26" height="26" viewBox="0 0 26 26"><path d="M6.90 14.20A6.1 6.1 0 1 0 13.80 8.13" fill="none" stroke="#262626" stroke-width="1.6"/><path d="M14.00 8.10H10.80" fill="none" stroke="#262626" stroke-width="1.6"/><path d="M13.00 5.70L10.70 8.10L13.00 10.50" fill="none" stroke="#262626" stroke-width="1.7"/><text x="13.10" y="16.65" font-family="Liberation Sans" font-weight="bold" font-size="6.4" text-anchor="middle" fill="#262626" letter-spacing="-0.2">30</text></svg>
<svg class="a" style="left:310.4px;top:386px" width="26" height="26" viewBox="0 0 26 26"><path d="M6.90 14.20A6.1 6.1 0 1 0 13.80 8.13" fill="none" stroke="#262626" stroke-width="1.6"/><path d="M14.00 8.10H10.80" fill="none" stroke="#262626" stroke-width="1.6"/><path d="M13.00 5.70L10.70 8.10L13.00 10.50" fill="none" stroke="#262626" stroke-width="1.7"/><text x="13.10" y="16.65" font-family="Liberation Sans" font-weight="bold" font-size="6.4" text-anchor="middle" fill="#262626" letter-spacing="-0.2">10</text></svg>
<div class="a" style="left:353.5px;top:375px;width:48px;height:48px;border-radius:50%;background:#4D7FE8"></div>
<svg class="a" style="left:373px;top:392px" width="12" height="15" viewBox="0 0 12 15"><path d="M0.8 0.4L11.5 7.5L0.8 14.6Z" fill="#333333"/></svg>
<svg class="a" style="left:418.4px;top:386px" width="26" height="26" viewBox="0 0 26 26"><path d="M19.10 14.20A6.1 6.1 0 1 1 12.20 8.13" fill="none" stroke="#262626" stroke-width="1.6"/><path d="M12.00 8.10H15.20" fill="none" stroke="#262626" stroke-width="1.6"/><path d="M13.00 5.70L15.30 8.10L13.00 10.50" fill="none" stroke="#262626" stroke-width="1.7"/><text x="13.10" y="16.65" font-family="Liberation Sans" font-weight="bold" font-size="6.4" text-anchor="middle" fill="#262626" letter-spacing="-0.2">10</text></svg>
<svg class="a" style="left:466.3px;top:386px" width="26" height="26" viewBox="0 0 26 26"><path d="M19.10 14.20A6.1 6.1 0 1 1 12.20 8.13" fill="none" stroke="#262626" stroke-width="1.6"/><path d="M12.00 8.10H15.20" fill="none" stroke="#262626" stroke-width="1.6"/><path d="M13.00 5.70L15.30 8.10L13.00 10.50" fill="none" stroke="#262626" stroke-width="1.7"/><text x="13.10" y="16.65" font-family="Liberation Sans" font-weight="bold" font-size="6.4" text-anchor="middle" fill="#262626" letter-spacing="-0.2">30</text></svg>
<svg class="a" style="left:518px;top:392px" width="19" height="15" viewBox="0 0 19 15"><path d="M1.2 5H4.6L9 1.5V13.5L4.6 10H1.2Z" fill="none" stroke="#2B2B2B" stroke-width="1.6" stroke-linejoin="round"/><path d="M12 5.2a3.2 3.2 0 0 1 0 4.6" fill="none" stroke="#2B2B2B" stroke-width="1.5"/><path d="M14.6 2.2a7.5 7.5 0 0 1 0 10.6" fill="none" stroke="#2B2B2B" stroke-width="1.5"/></svg>

<div class="a" style="left:557.5px;top:385px;width:72px;height:28.5px;border-radius:11px;background:#FFFFFF;border:1px solid #C9D6F2"></div>
<div class="a" style="left:581px;top:393px;font-size:13px;line-height:13px;font-weight:bold;color:#2B2B2B">1x</div>
<svg class="a" style="left:600px;top:397px" width="7" height="5" viewBox="0 0 7 5"><path d="M0.5 0.8H6.5L3.5 4.2Z" fill="#444"/></svg>

<svg class="a" style="left:861px;top:394px" width="11" height="11" viewBox="0 0 11 11"><path d="M1.5 0.5V10.8" stroke="#2B2B2B" stroke-width="1.8"/><path d="M2 1H6.5L7 2.2H10.5V7.8H6.3L5.8 6.6H2Z" fill="#2B2B2B"/></svg>
<div class="a" style="left:877.5px;top:394px;font-size:12px;line-height:12px;color:#3A3A3A">Markieren</div>
<div class="a" style="left:953px;top:385.5px;width:154px;height:28px;border-radius:12px;background:#FFFFFF;border:1px solid #C9D6F2"></div>
<div class="a" style="left:953px;top:394px;width:154px;text-align:center;font-size:12.7px;line-height:12.7px;font-weight:bold;color:#2B2B2B">Markierte Ereignisse</div>

<!-- speakers bar -->
<div class="a" style="left:46px;top:434.5px;font-size:9px;line-height:9px;color:#3A3A3A">Speakers</div>
<div class="a" style="left:111px;top:431.2px;width:615px;height:14.4px;background:#4A7CD6;border-radius:1.5px"></div>
<div class="a" style="left:727px;top:431.2px;width:380px;height:14.4px;background:#7E75E2;border-radius:1.5px"></div>


<!-- KI-Zusammenfassung -->
<svg class="a" style="left:47px;top:472px" width="11" height="11" viewBox="0 0 11 11"><rect x="0.8" y="0.8" width="9.4" height="9.4" rx="1" fill="none" stroke="#333" stroke-width="1.5"/><path d="M3.3 8.2V6.2M5.5 8.2V4.2M7.7 8.2V5.2" stroke="#333" stroke-width="1.2"/></svg>
<div class="a" style="left:65.5px;top:471.5px;font-size:11px;line-height:11px;font-weight:bold;color:#2B2B2B">KI-Zusammenfassung</div>
<svg class="a" style="left:1060px;top:470px" width="12" height="12" viewBox="0 0 12 12"><path d="M1.9 9.8L8.3 3.1" stroke="#444" stroke-width="1.1" fill="none"/><path d="M4.1 2.5H8.7V7.4" stroke="#333" stroke-width="1.25" fill="none"/></svg>
<svg class="a" style="left:1083px;top:469px" width="13" height="13" viewBox="0 0 13 13"><path d="M2.7 11.2L10.3 3.0" stroke="#444" stroke-width="1.1" fill="none"/><path d="M7.2 2.6H10.9V6.4M2.3 7.6V11.5H5.8" stroke="#333" stroke-width="1.25" fill="none"/></svg>

<div class="a" style="left:59.5px;top:501.5px;font-size:12px;line-height:12px;color:#3E9AA0">Transkript</div>
<div class="a" style="left:141px;top:501.5px;font-size:12px;line-height:12px;color:#8E8E8E">Zusammenfassung</div>
<div class="a" style="left:271px;top:501.5px;font-size:12px;line-height:12px;color:#8E8E8E">Aktionen</div>
<div class="a" style="left:346px;top:501.5px;font-size:12px;line-height:12px;color:#8E8E8E">Entscheidungen</div>
<div class="a" style="left:459.5px;top:501.5px;font-size:12px;line-height:12px;color:#8E8E8E">Kapitel</div>
<div class="a" style="left:38px;top:525px;width:1069px;height:1px;background:#C9D6F2"></div>
<div class="a" style="left:46px;top:523px;width:81px;height:2px;background:#3E9AA0"></div>

<div class="a" style="left:944px;top:498.8px;width:36px;height:20px;border:1px solid #C9D6F2;border-radius:6px;font-size:11px;line-height:18px;text-align:center;color:#8A8A8A">MD</div>
<div class="a" style="left:981px;top:498.8px;width:40px;height:20px;border:1px solid #C9D6F2;border-radius:6px;font-size:11px;line-height:18px;text-align:center;color:#8A8A8A">SRT</div>
<div class="a" style="left:1023px;top:498.8px;width:48px;height:20px;border:1px solid #C9D6F2;border-radius:6px;font-size:11px;line-height:18px;text-align:center;color:#8A8A8A">JSON</div>
<div class="a" style="left:1072px;top:498.8px;width:27px;height:20px;border:1px solid #C9D6F2;border-radius:6px"></div>
<svg class="a" style="left:1080px;top:503.3px" width="10" height="10" viewBox="0 0 10 10"><path d="M8.2 5.2A3.4 3.4 0 1 1 7 2.4" fill="none" stroke="#8A8A8A" stroke-width="1.3"/><path d="M5.8 0.8H8.8V3.8Z" fill="#8A8A8A"/></svg>

<div class="a" style="left:1028px;top:538px;width:63px;height:20px;border:1px solid #C9D6F2;border-radius:6px"></div>
<svg class="a" style="left:1038px;top:543px" width="10" height="11" viewBox="0 0 10 11"><path d="M1 2.5V10H7" fill="none" stroke="#8E8E8E" stroke-width="1.2"/><rect x="2.8" y="0.5" width="6.4" height="8" rx="0.8" fill="#8E8E8E"/></svg>
<div class="a" style="left:1053.5px;top:543px;font-size:11px;line-height:11px;color:#8A8A8A">Kopie</div>

<!-- speaker table -->
<div class="a" style="left:54px;top:566px;width:1037px;height:132px;border:1px solid #C9D6F2;border-radius:7px;background:#F4F7FE;overflow:hidden">
  <div style="position:absolute;left:0;top:0;width:100%;height:31px;background:#FFFFFF;border-bottom:1px solid #C9D6F2"></div>
  <div style="position:absolute;left:0;top:64px;width:100%;height:1px;background:#C9D6F2"></div>
  <div style="position:absolute;left:0;top:97px;width:100%;height:1px;background:#C9D6F2"></div>
</div>
<div class="a" style="left:65.5px;top:579px;font-size:11px;line-height:11px;font-weight:bold;color:#9A9A9A;letter-spacing:0.25px">SPRECHER</div>
<div class="a" style="left:65px;top:610.5px;width:8px;height:8px;border-radius:50%;background:#2A63D4"></div>
<div class="a" style="left:65px;top:644px;width:8px;height:8px;border-radius:50%;background:#6A5BE0"></div>
<div class="a" style="left:65px;top:677.5px;width:8px;height:8px;border-radius:50%;background:#E06A2A"></div>
<div class="a" style="left:81.5px;top:609px;font-size:12px;line-height:12px;color:#2B2B2B">Thomas</div>
<div class="a" style="left:81.5px;top:642.5px;font-size:12px;line-height:12px;color:#2B2B2B">Anna</div>
<div class="a" style="left:81.5px;top:676px;font-size:12px;line-height:12px;color:#2B2B2B">Markus</div>
<div class="a" style="left:940.5px;top:603.7px;width:139.5px;height:20.3px;border:1px solid #C9D6F2;border-radius:5px;background:#F4F7FE"></div>
<div class="a" style="left:951px;top:608.7px;font-size:11px;line-height:11px;color:#8E8E8E">Zusammenführen mit.</div>
<svg class="a" style="left:1067px;top:611.1px" width="10" height="6" viewBox="0 0 10 6"><path d="M0.8 0.8L5 5L9.2 0.8" fill="none" stroke="#666" stroke-width="1"/></svg>
<div class="a" style="left:940.5px;top:637.2px;width:139.5px;height:20.3px;border:1px solid #C9D6F2;border-radius:5px;background:#F4F7FE"></div>
<div class="a" style="left:951px;top:642.2px;font-size:11px;line-height:11px;color:#8E8E8E">Zusammenführen mit.</div>
<svg class="a" style="left:1067px;top:644.6px" width="10" height="6" viewBox="0 0 10 6"><path d="M0.8 0.8L5 5L9.2 0.8" fill="none" stroke="#666" stroke-width="1"/></svg>
<div class="a" style="left:940.5px;top:670.7px;width:139.5px;height:20.3px;border:1px solid #C9D6F2;border-radius:5px;background:#F4F7FE"></div>
<div class="a" style="left:951px;top:675.7px;font-size:11px;line-height:11px;color:#8E8E8E">Zusammenführen mit.</div>
<svg class="a" style="left:1067px;top:678.1px" width="10" height="6" viewBox="0 0 10 6"><path d="M0.8 0.8L5 5L9.2 0.8" fill="none" stroke="#666" stroke-width="1"/></svg>
<div class="a" style="left:54px;top:710.5px;width:55.5px;height:16.5px;border:1.5px solid #3A6FD8;border-radius:9px;text-align:center;font-size:11px;line-height:14.6px;font-weight:bold;color:#3A6FD8">Thomas</div>
<div class="a mono" style="left:122.7px;top:715.8px;font-size:11px;line-height:11px;color:#A0A0A0;transform:scaleY(1.14);transform-origin:0 9px;color:#9A9A9A">00:00</div>
<div class="a" style="left:58px;top:733.0px;font-size:13px;line-height:13px;color:#333333">Guten Morgen zusammen, beginnen wir mit dem Projekt Alpha Update.</div>
<div class="a" style="left:54px;top:761.5px;width:41.2px;height:16.5px;border:1.5px solid #6A5BE0;border-radius:9px;text-align:center;font-size:11px;line-height:14.6px;font-weight:bold;color:#6A5BE0">Anna</div>
<div class="a mono" style="left:107.9px;top:766.8px;font-size:11px;line-height:11px;color:#A0A0A0;transform:scaleY(1.14);transform-origin:0 9px;color:#9A9A9A">00:05</div>
<div class="a" style="left:58px;top:784.0px;font-size:13px;line-height:13px;color:#333333">Danke Thomas. Bezüglich des Zeitplans gibt es ein Problem mit der Frontend-Integration, sodass sich der Beta-Release um zwei Wochen verzögert.</div>
<div class="a" style="left:54px;top:812.5px;width:51.6px;height:16.5px;border:1.5px solid #E0702E;border-radius:9px;text-align:center;font-size:11px;line-height:14.6px;font-weight:bold;color:#E0702E">Markus</div>
<div class="a mono" style="left:118.5px;top:817.8px;font-size:11px;line-height:11px;color:#A0A0A0;transform:scaleY(1.14);transform-origin:0 9px;color:#9A9A9A">00:15</div>
<div class="a" style="left:58px;top:835.0px;font-size:13px;line-height:13px;color:#333333">Technisch gesehen ist die API-Latenz höher als erwartet. Wir müssen die Instanzen skalieren, was das Monatsbudget um etwa zehn Prozent beeinflusst.</div>
<div class="a" style="left:54px;top:863.5px;width:55.5px;height:16.5px;border:1.5px solid #3A6FD8;border-radius:9px;text-align:center;font-size:11px;line-height:14.6px;font-weight:bold;color:#3A6FD8">Thomas</div>
<div class="a mono" style="left:122.7px;top:868.8px;font-size:11px;line-height:11px;color:#A0A0A0;transform:scaleY(1.14);transform-origin:0 9px;color:#9A9A9A">00:25</div>
<div class="a" style="left:58px;top:886.0px;font-size:13px;line-height:13px;color:#333333">Verstanden. Genehmigen wir die Budgeterhöhung und setzen den neuen Termin. Meeting beendet.</div>


<!-- right panel -->
<div class="a" style="left:1109.5px;top:180px;width:2px;height:862px;background:#D8DADF;border-radius:1px"></div>
<svg class="a" style="left:1121px;top:189px" width="14" height="12" viewBox="0 0 14 12"><rect x="3.7" y="3.5" width="6.6" height="7.3" rx="0.6" fill="none" stroke="#333" stroke-width="1.25"/><path d="M6.2 1.0L8.2 1.6L7.6 2.9" fill="#333"/><path d="M2.9 5.2L1.2 6.7L2.9 8.2ZM11.1 5.2L12.8 6.7L11.1 8.2Z" fill="#333"/><circle cx="5.8" cy="6.1" r="0.75" fill="#333"/><circle cx="8.2" cy="6.1" r="0.75" fill="#333"/><path d="M5.2 8.6H8.8" stroke="#333" stroke-width="0.9"/></svg>
<div class="a" style="left:1140.5px;top:190px;font-size:11px;line-height:11px;font-weight:bold;color:#2B2B2B">KI-Agent &amp; Cowork</div>
<svg class="a" style="left:1835px;top:188px" width="10" height="11" viewBox="0 0 10 11"><path d="M8.6 2.4L2.6 8.4" stroke="#333" stroke-width="1.1" fill="none"/><path d="M1.7 4.5V9.1H6.5" stroke="#444" stroke-width="1.4" fill="none"/></svg>
<svg class="a" style="left:1858px;top:188px" width="12" height="12" viewBox="0 0 12 12"><path d="M2.6 9.4L9.6 2.4" stroke="#333" stroke-width="1.1" fill="none"/><path d="M6.5 1.6H10.3V5.3M1.6 6.8V10.3H5.7" stroke="#444" stroke-width="1.4" fill="none"/></svg>

<div class="a" style="left:1112.5px;top:211px;width:769.5px;height:831px;background:#FFFFFF;border-radius:10px;overflow:hidden">
  <div style="position:absolute;left:0;top:42px;width:100%;height:36px;background:#F4F7FE;border-top:1px solid #C9D6F2;border-bottom:1px solid #C9D6F2"></div>
  <div style="position:absolute;left:0;top:703px;width:100%;height:1px;background:#C9D6F2"></div>
  <div style="position:absolute;left:0;top:742px;width:100%;height:1.5px;background:#C9D6F2"></div>
  <div style="position:absolute;left:0;top:778px;width:100%;height:1px;background:#C9D6F2"></div>
</div>
<svg class="a" style="left:1127px;top:225px" width="15" height="13" viewBox="0 0 15 13"><rect x="3" y="3" width="9" height="8.8" rx="1" fill="#333"/><path d="M6.3 3L7.5 1.3L8.7 3Z" fill="#333"/><path d="M3.2 5L1.2 7.2L3.2 9.4ZM11.8 5L13.8 7.2L11.8 9.4Z" fill="#333"/><rect x="4.7" y="5.9" width="1.8" height="1.6" fill="#fff"/><rect x="8.5" y="5.9" width="1.8" height="1.6" fill="#fff"/><rect x="5.2" y="9.1" width="4.6" height="1.1" fill="#fff"/></svg>
<div class="a" style="left:1150px;top:226px;font-size:13px;line-height:13px;font-weight:bold;color:#2B2B2B">Kontext: Demo_Transcription_de_20260330080004.webm</div>
<div class="a" style="left:1834px;top:221px;width:34px;height:22px;border:1px solid #C9D6F2;border-radius:6px;background:#F4F7FE"></div>
<svg class="a" style="left:1845.5px;top:227px" width="10" height="10" viewBox="0 0 10 10"><path d="M5 1V9M1 5H9" stroke="#A8A8A8" stroke-width="1.3"/></svg>

<div class="a" style="left:1124px;top:266px;font-size:11px;line-height:11px;color:#A0A0A0">Sitzungen</div>
<div class="a" style="left:1178.5px;top:260px;width:340px;height:22px;border:1px solid #C9D6F2;border-radius:6px;background:#F4F7FE"></div>
<div class="a" style="left:1187.5px;top:265px;font-size:12px;line-height:12px;color:#333">Noch keine Sitzungen. Beginnen Sie unten ein Gespräch.</div>
<svg class="a" style="left:1500px;top:269px" width="7" height="5" viewBox="0 0 7 5"><path d="M0.6 0.8L3.5 3.8L6.4 0.8" fill="none" stroke="#888" stroke-width="1"/></svg>
<div class="a" style="left:1772px;top:261px;width:100px;height:21px;border:1.5px solid #4A9FA5;border-radius:6px"></div>
<svg class="a" style="left:1782.5px;top:266.5px" width="9" height="9" viewBox="0 0 9 9"><path d="M4.5 0.5V8.5M0.5 4.5H8.5" stroke="#4A9FA5" stroke-width="1.2"/></svg>
<div class="a" style="left:1797px;top:266px;font-size:11px;line-height:11px;color:#4A9FA5">Neue Sitzung</div>

<!-- empty state -->
<svg class="a" style="left:1482px;top:550.5px" width="32" height="32" viewBox="0 0 32 32"><polygon points="16.00,3.20 21.05,9.54 28.65,12.39 24.18,19.16 23.82,27.26 16.00,25.10 8.18,27.26 7.82,19.16 3.35,12.39 10.95,9.54" fill="#B8D7DD" stroke="#B8D7DD" stroke-width="4.2" stroke-linejoin="round"/><circle cx="12.6" cy="14" r="2.1" fill="#FFFFFF"/><circle cx="19.4" cy="14" r="2.1" fill="#FFFFFF"/><path d="M11.2 18.2h9.6c-.6 2.7-2.4 4.1-4.8 4.1s-4.2-1.4-4.8-4.1z" fill="#FFFFFF"/></svg>
<div class="a" style="left:1397.5px;top:597.5px;width:200px;text-align:center;font-size:14px;line-height:14px;font-weight:bold;color:#2B2B2B">KI-Agent</div>
<div class="a" style="left:1397.5px;top:628px;width:200px;text-align:center;font-size:11.85px;line-height:12px;color:#9A9A9A">Befehle: /new · /clear · /cost · /help</div>

<!-- chips -->
<div class="a" style="left:1125.5px;top:923px;width:232px;height:22.5px;border:1px solid #C9D6F2;border-radius:12px"></div>
<svg class="a" style="left:1138px;top:929px" width="10" height="10" viewBox="0 0 10 10"><path d="M1 1.2C1 .6 1.4.2 2 .2H6.2L9.2 3.2V8.8C9.2 9.4 8.8 9.8 8.2 9.8H2C1.4 9.8 1 9.4 1 8.8Z" fill="#8E8E8E"/><path d="M2.6 3.2H3.8M2.6 5.2H3.8M2.6 7.2H3.8" stroke="#fff" stroke-width="0.9"/></svg>
<div class="a" style="left:1152.5px;top:929px;font-size:11px;line-height:11px;color:#8E8E8E">Fassen Sie diese Aufnahme zusammen</div>
<div class="a" style="left:1364px;top:923px;width:173px;height:22.5px;border:1px solid #C9D6F2;border-radius:12px"></div>
<svg class="a" style="left:1375px;top:929px" width="10" height="10" viewBox="0 0 10 10"><path d="M8.9 4A4.1 4.1 0 1 1 6.8 1.3" fill="none" stroke="#8E8E8E" stroke-width="1.2"/><path d="M3 5L4.6 6.6L9 2.2" fill="none" stroke="#8E8E8E" stroke-width="1.2"/></svg>
<div class="a" style="left:1390px;top:929px;font-size:11px;line-height:11px;color:#8E8E8E">Finden Sie Aktionselemente</div>
<div class="a" style="left:1543.5px;top:923px;width:168.5px;height:22.5px;border:1px solid #C9D6F2;border-radius:12px"></div>
<svg class="a" style="left:1555px;top:930px" width="10" height="8" viewBox="0 0 10 8"><rect x="0" y="0" width="10" height="8" rx="1" fill="#8E8E8E"/><path d="M0.8 1.2L5 4.2L9.2 1.2" fill="none" stroke="#fff" stroke-width="1"/></svg>
<div class="a" style="left:1570.5px;top:929px;font-size:11px;line-height:11px;color:#8E8E8E">Entwurf einer Folge-E-Mail</div>

<!-- mode row -->
<div class="a" style="left:1123px;top:961px;width:69.5px;height:21px;border:1px solid #C9D6F2;border-radius:8px"></div>
<div class="a" style="left:1132.5px;top:967px;font-size:11px;line-height:11px;color:#8E8E8E">Claude</div>
<svg class="a" style="left:1173px;top:970px" width="7" height="5" viewBox="0 0 7 5"><path d="M0.6 0.8L3.5 3.8L6.4 0.8" fill="none" stroke="#999" stroke-width="1"/></svg>
<div class="a" style="left:1201px;top:960.5px;width:163px;height:22px;border-radius:7px;background:#F1F5FC"></div>
<div class="a" style="left:1202.5px;top:962.8px;width:54.5px;height:18.3px;border-radius:6px;background:#FFFFFF;box-shadow:0 1px 2px rgba(0,0,20,0.12)"></div>
<div class="a" style="left:1212.5px;top:967px;font-size:11px;line-height:11px;color:#333">Fragen</div>
<div class="a" style="left:1269.5px;top:967px;font-size:11px;line-height:11px;color:#8E8E8E">Code</div>
<div class="a" style="left:1317.5px;top:967px;font-size:11px;line-height:11px;color:#8E8E8E">Planen</div>

<div class="a" style="left:1552px;top:961.5px;width:102.5px;height:20.5px;border-radius:10px;background:#4E9AA0"></div>
<div class="a" style="left:1552px;top:967px;width:102.5px;text-align:center;font-size:11px;line-height:11px;color:#FFFFFF">Claude Haiku 4.5</div>
<div class="a" style="left:1658.5px;top:961.5px;width:109px;height:20.5px;border-radius:10px;border:1px solid #C9D6F2"></div>
<div class="a" style="left:1658.5px;top:967px;width:109px;text-align:center;font-size:11px;line-height:11px;color:#8E8E8E">Claude Sonnet 4.6</div>
<div class="a" style="left:1772px;top:961.5px;width:99.5px;height:20.5px;border-radius:10px;border:1px solid #C9D6F2"></div>
<div class="a" style="left:1772px;top:967px;width:99.5px;text-align:center;font-size:11px;line-height:11px;color:#8E8E8E">Claude Opus 4.6</div>

<!-- input -->
<div class="a" style="left:1123.5px;top:998px;width:704.5px;height:35.5px;border:1px solid #C9D6F2;border-radius:8px;background:#FFFFFF"></div>
<div class="a" style="left:1134.5px;top:1009px;font-size:13px;line-height:13px;color:#8E8E8E">Alles fragen... (Eingabetaste zum Senden, Umschalt+Eingabetaste für Zeilenumbruch)</div>
<div class="a" style="left:1836px;top:998px;width:36px;height:35.5px;border-radius:8px;background:linear-gradient(135deg,#C4D6F6,#CCCFF5)"></div>
<svg class="a" style="left:1846px;top:1009px" width="16" height="13" viewBox="0 0 16 13"><path d="M0.5 0.5L15.5 6.5L0.5 12.5L2.5 6.5Z" fill="#FFFFFF"/></svg>

</body></html>
